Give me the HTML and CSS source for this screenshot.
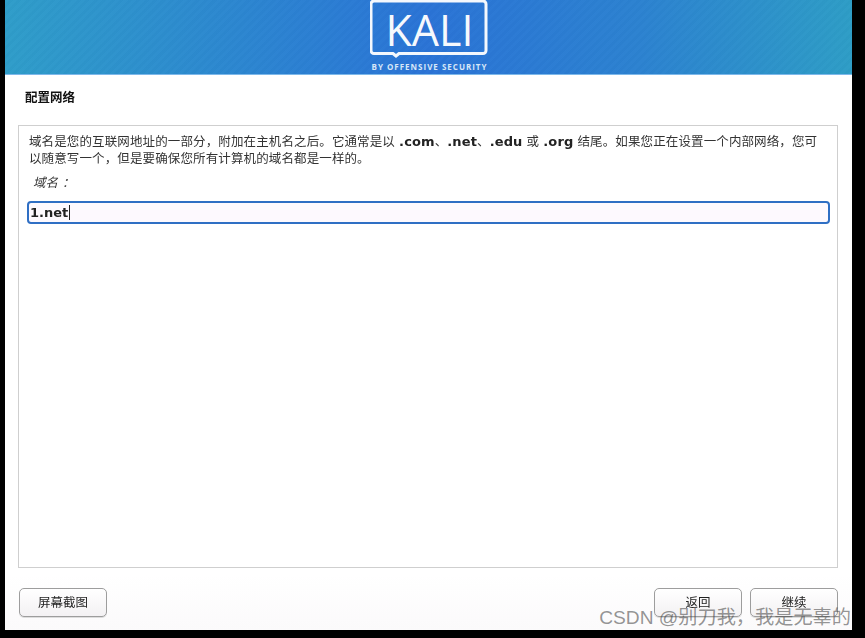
FILE: index.html
```
<!DOCTYPE html>
<html lang="zh">
<head>
<meta charset="utf-8">
<title>配置网络</title>
<link rel="stylesheet" href="styles.css">
</head>
<body>
<div class="window">
  <header class="banner">
    <div class="logo">
      <svg class="logo-frame" width="120" height="60" viewBox="0 0 120 60" aria-hidden="true">
        <path d="M23 53.500H4a3 3 0 0 1-3-3V4a3 3 0 0 1 3-3h109a3 3 0 0 1 3 3v46.500a3 3 0 0 1-3 3H29l-3 2.500z" fill="none" stroke="#f4f8fd" stroke-width="3"/>
      </svg>
      <div class="logo-word">KALI</div>
      <div class="logo-sub">BY OFFENSIVE SECURITY</div>
    </div>
  </header>
  <main class="content">
    <h1 class="title">配置网络</h1>
    <section class="panel">
      <p class="desc">域名是您的互联网地址的一部分，附加在主机名之后。它通常是以 <b>.com</b>、<b>.net</b>、<b>.edu</b> 或 <b>.org</b> 结尾。如果您正在设置一个内部网络，您可以随意写一个，但是要确保您所有计算机的域名都是一样的。</p>
      <label class="field-label" for="domain">域名&nbsp;：</label>
      <div class="input" id="domain"><span>1.net</span><i class="caret"></i></div>
    </section>
    <footer class="actions">
      <button class="btn">屏幕截图</button>
      <div class="nav">
        <button class="btn">返回</button>
        <button class="btn">继续</button>
      </div>
    </footer>
  </main>
</div>
<div class="watermark">CSDN @别刀我，我是无辜的</div>
</body>
</html>
```
FILE: styles.css
```
* { box-sizing: border-box; }
html, body { margin: 0; height: 100%; }
body {
  background: #000;
  overflow: hidden;
  position: relative;
  font-family: "DejaVu Sans", "Noto Sans CJK SC", sans-serif;
  color: #222;
}
.window {
  width: 847px;
  height: 630px;
  margin-left: 5px;
  background: #fff;
  display: flex;
  flex-direction: column;
}
.banner {
  height: 75px;
  flex: none;
  display: flex;
  justify-content: center;
  border-bottom: 1px solid #7db8ea;
  background:
    repeating-linear-gradient(135deg, rgba(255,255,255,.012) 0 3px, rgba(0,0,0,.012) 3px 6px),
    linear-gradient(90deg, #2f9dc9 0%, #2c86d0 28%, #2a73d6 50%, #2c82d0 75%, #2e9dc6 100%);
}
.logo {
  width: 120px;
  height: 74px;
  position: relative;
  margin-left: 2px;
}
.logo-frame { position: absolute; left: 0; top: 0; }
.logo-word {
  position: absolute;
  left: 0;
  right: 0;
  top: 6px;
  text-align: center;
  font: 500 43px/48px "Open Sans", sans-serif;
  color: #f6f9fd;
}
.logo-sub {
  position: absolute;
  left: 0;
  right: 0;
  top: 62px;
  text-align: center;
  white-space: nowrap;
  font: 700 8px/10px "Open Sans", sans-serif;
  letter-spacing: 1px;
  color: #d7e7f8;
}
.content {
  flex: 1;
  display: flex;
  flex-direction: column;
  padding: 0 14px 13px 13px;
  background: linear-gradient(#fff 90%, #fbfafb);
  filter: blur(.35px);
}
.title {
  margin: 16px 0 0 7px;
  height: 34px;
  font-size: 12.500px;
  line-height: 13px;
  font-weight: 700;
  color: #111;
}
.panel {
  height: 443px;
  border: 1px solid #cfcfcf;
  padding: 7px 8px 0 10px;
  background: #fff;
}
.desc {
  margin: 0;
  font-size: 12.500px;
  letter-spacing: .12px;
  line-height: 17px;
  width: 794px;
  color: #333;
}
.desc b { font-weight: 700; color: #222; font-size: 13px; line-height: 1; }
.field-label {
  display: block;
  margin: 7px 0 0 4px;
  height: 20px;
  font-size: 12.500px;
  line-height: 17px;
  font-style: italic;
  color: #333;
}
.input {
  display: flex;
  align-items: center;
  width: 803px;
  height: 23px;
  margin: 7px 0 0 -2px;
  padding: 0 1px;
  border: 2px solid #2f6fc4;
  border-radius: 4px;
  background: #fdf9fe;
  font-size: 13px;
  font-weight: 700;
  color: #222;
}
.caret { width: 1px; height: 15px; background: #222; margin-left: 1px; }
.actions {
  display: flex;
  justify-content: space-between;
  margin-top: 20px;
  padding: 0 0 0 1px;
}
.nav { display: flex; gap: 8px; }
.btn {
  width: 88px;
  height: 29px;
  padding: 0 0 2px;
  border: 1px solid #9d9d9d;
  border-radius: 5px;
  background: linear-gradient(#fff, #f3f1f3);
  font-family: inherit;
  font-size: 12.500px;
  color: #222;
  box-shadow: 0 1px 0 #ddd;
}
.watermark {
  position: absolute;
  right: 14px;
  top: 606px;
  font: 400 19.200px/24px "Liberation Sans", "Noto Sans CJK SC", sans-serif;
  color: rgba(70,70,70,.58);
  white-space: nowrap;
}
```
